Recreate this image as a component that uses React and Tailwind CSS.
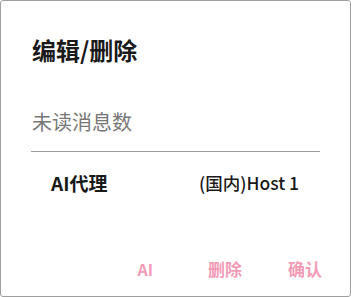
export default function App() {
  const font = { fontFamily: '"Noto Sans CJK SC", "Noto Sans", sans-serif' }

  return (
    <div
      className="flex h-[297px] w-[351px] flex-col overflow-hidden rounded-[3px] border border-[#9e9e9e] bg-white"
      style={font}
    >
      <div className="px-[31px] pt-[32px]">
        <h2 className="text-[24px] font-bold leading-[34px] text-[#1a1a1a]">编辑/删除</h2>
      </div>

      <div className="px-[30px] pt-[41px]">
        <div className="border-b border-[#9a9a9a] pb-[15px] pl-[1px]">
          <p className="text-[20px] leading-[28px] text-[#777777]">未读消息数</p>
        </div>
      </div>

      <div className="flex items-center justify-between pl-[50px] pr-[51px] pt-[18px]">
        <span className="text-[19px] font-bold leading-[26px] text-[#1a1a1a]">AI代理</span>
        <span className="text-[17.5px] font-medium leading-[26px] text-[#1a1a1a]">(国内)Host 1</span>
      </div>

      <div className="mt-auto flex items-center justify-end gap-[46px] pb-[15px] pr-[28px]">
        <button className="mr-[9px] text-[16px] font-bold leading-[24px] text-[#f29bb6]">AI</button>
        <button className="text-[17px] font-bold leading-[24px] text-[#f29bb6]">删除</button>
        <button className="text-[17px] font-bold leading-[24px] text-[#f29bb6]">确认</button>
      </div>
    </div>
  )
}
